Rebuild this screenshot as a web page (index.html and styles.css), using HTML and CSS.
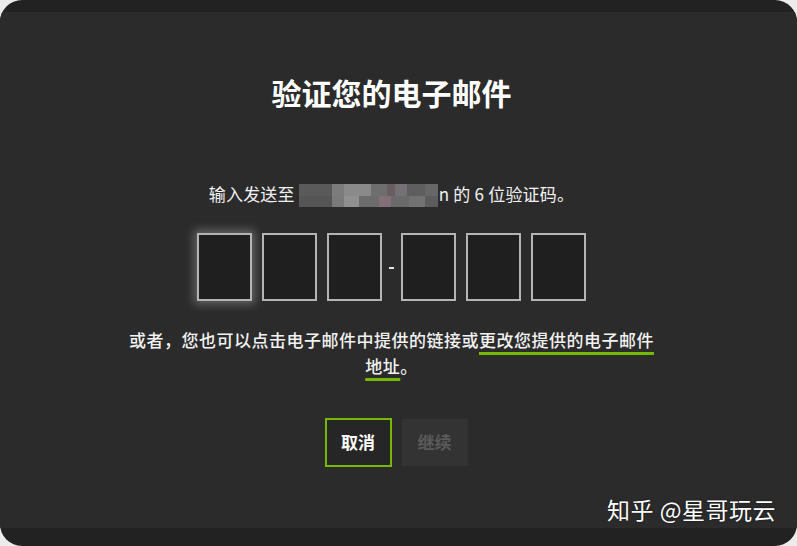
FILE: index.html
```html
<!DOCTYPE html>
<html>
<head>
  <meta charset="utf-8">
  <title>验证您的电子邮件</title>
  <link rel="stylesheet" href="styles.css">
</head>
<body>

<div class="frame">
  <div class="panel">

    <!-- heading -->
    <h1 class="title">验证您的电子邮件</h1>

    <p class="sent">输入发送至 <span class="masked"></span>n 的 6 位验证码。</p>

    <!-- code boxes -->
    <div class="code">
      <div class="digit focus"></div>
      <div class="digit"></div>
      <div class="digit"></div>
      <div class="dash"></div>
      <div class="digit"></div>
      <div class="digit"></div>
      <div class="digit"></div>
    </div>

    <p class="hint">或者，您也可以点击电子邮件中提供的链接或<a class="link">更改您提供的电子邮件地址</a>。</p>

    <div class="actions">
      <button class="btn cancel">取消</button>
      <button class="btn next">继续</button>
    </div>

  </div>
  <div class="mark">知乎 @星哥玩云</div>
</div>

</body>
</html>
```

FILE: styles.css
```css
html, body {
  margin: 0;
  height: 100%;
  background: #ececec;
}
body {
  font-family: "Noto Sans CJK SC", "Noto Sans", sans-serif;
  color: #f2f2f2;
}
.frame {
  position: relative;
  height: 546px;
  box-sizing: border-box;
  padding: 12px 0 18px 0;
  background: #222222;
  border-radius: 22px;
  overflow: hidden;
}
.panel {
  height: 100%;
  background: #2b2b2b;
  display: flex;
  flex-direction: column;
  align-items: center;
  padding-right: 14px;
}
.title {
  margin: 60px 0 0 0;
  font-size: 30px;
  line-height: 40px;
  font-weight: bold;
  color: #ffffff;
}
.sent {
  margin: 69px 0 0 0;
  font-size: 17px;
  line-height: 26px;
  letter-spacing: 0.2px;
}
.masked {
  display: inline-block;
  width: 139px;
  height: 23px;
  margin-right: 1px;
  vertical-align: -6px;
  background:
    linear-gradient(to right, #5a5a5a 0 33px, #7c7c7c 33px 45px, #8a8a8a 45px 72px, #6e6e6e 72px 88px, #6a5d62 88px 96px, #757075 96px 108px, #5e5e5e 108px 126px, #676767 126px 139px) top / 100% 12px no-repeat,
    linear-gradient(to right, #555555 0 33px, #7a7a7a 33px 45px, #909090 45px 60px, #6c6c6c 60px 80px, #846f78 80px 92px, #6a6a6a 92px 110px, #727272 110px 126px, #5c5c5c 126px 139px) bottom / 100% 11px no-repeat;
}
.code {
  margin-top: 26px;
  display: flex;
  align-items: center;
  gap: 10px;
}
.digit {
  width: 51px;
  height: 64px;
  border: 2px solid #b4b4b4;
  background: #1f1f1f;
}
.digit.focus {
  box-shadow: 0 0 9px 3px rgba(255, 255, 255, 0.28);
}
.dash {
  width: 5px;
  height: 2px;
  margin: 2px -3px 0 -3px;
  background: #e8e8e8;
}
.hint {
  margin: 26px 0 0 0;
  width: 540px;
  text-align: center;
  font-size: 17px;
  line-height: 26px;
  letter-spacing: 0.5px;
  font-weight: 500;
}
.link {
  color: #f2f2f2;
  text-decoration: underline 3px #76b900;
  text-underline-offset: 5px;
}
.actions {
  margin-top: 39px;
  margin-left: 9px;
  display: flex;
  align-items: flex-start;
  gap: 10px;
}
.btn {
  box-sizing: border-box;
  font-family: "Noto Sans CJK SC", "Noto Sans", sans-serif;
  font-size: 17px;
  font-weight: bold;
  height: 49px;
  padding: 0 0 2px 0;
  border: 2px solid transparent;
  white-space: nowrap;
}
.cancel {
  width: 67px;
  color: #ffffff;
  background: #262626;
  border-color: #76b900;
}
.next {
  width: 66px;
  margin-top: 1px;
  height: 47px;
  color: #5a5a5a;
  background: #333333;
  border-color: #333333;
}
.mark {
  position: absolute;
  right: 21px;
  bottom: 22px;
  font-size: 23px;
  line-height: 30px;
  color: #ffffff;
  letter-spacing: 0.5px;
  text-shadow: 0 0 2px rgba(0, 0, 0, 0.6);
}
```
